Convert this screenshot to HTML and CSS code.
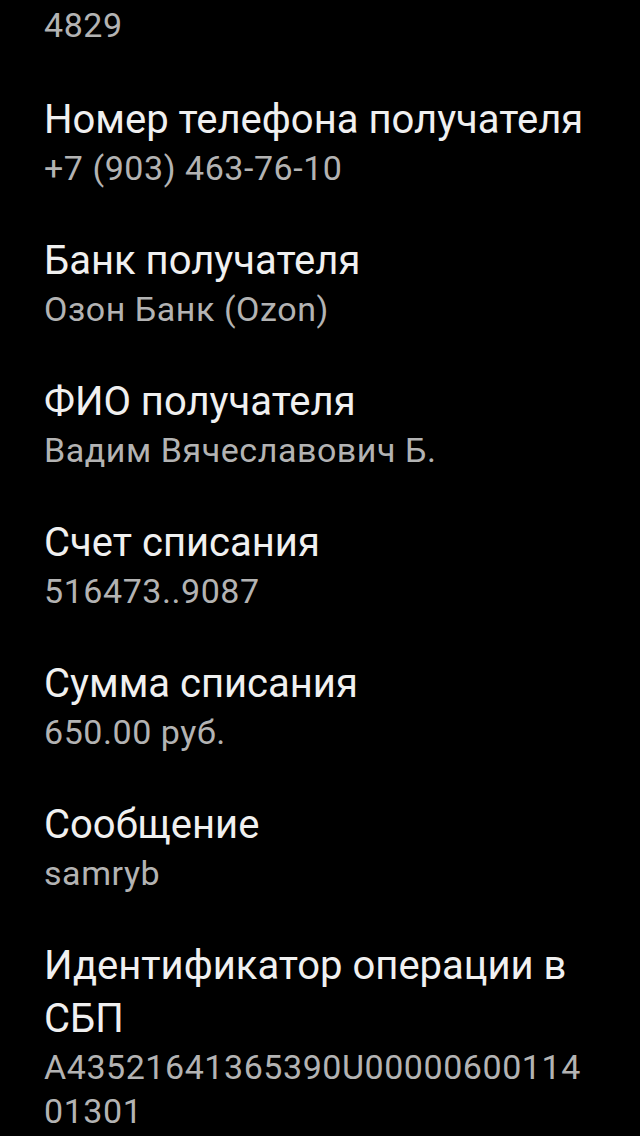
FILE: index.html
```html
<!DOCTYPE html>
<html lang="ru">
<head>
<meta charset="utf-8">
<title>Детали перевода</title>
<link rel="stylesheet" href="styles.css">
</head>
<body>
<main class="details">
  <section class="item item-first">
    <div class="value">4829</div>
  </section>
  <section class="item">
    <div class="label">Номер телефона получателя</div>
    <div class="value">+7 (903) 463-76-10</div>
  </section>
  <section class="item">
    <div class="label">Банк получателя</div>
    <div class="value">Озон Банк (Ozon)</div>
  </section>
  <section class="item">
    <div class="label">ФИО получателя</div>
    <div class="value">Вадим Вячеславович Б.</div>
  </section>
  <section class="item">
    <div class="label">Счет списания</div>
    <div class="value">516473..9087</div>
  </section>
  <section class="item">
    <div class="label">Сумма списания</div>
    <div class="value">650.00 руб.</div>
  </section>
  <section class="item">
    <div class="label">Сообщение</div>
    <div class="value">samryb</div>
  </section>
  <section class="item">
    <div class="label">Идентификатор операции в СБП</div>
    <div class="value">A43521641365390U0000060011401301</div>
  </section>
</main>
</body>
</html>
```
FILE: styles.css
```css
html, body {
  margin: 0;
  padding: 0;
  background: #000;
}
body {
  width: 640px;
  height: 1136px;
  overflow: hidden;
  font-family: Roboto, "Noto Sans", sans-serif;
}
.details {
  display: flex;
  flex-direction: column;
  gap: 44px;
  padding: 3px 44px 0 44px;
}
.item-first {
  margin-bottom: 2px;
}
.label {
  color: #f0f0f0;
  font-size: 40px;
  line-height: 53px;
}
.value {
  color: #b3b3b3;
  font-size: 34px;
  line-height: 44px;
  letter-spacing: 0.55px;
  word-break: break-all;
}
```
